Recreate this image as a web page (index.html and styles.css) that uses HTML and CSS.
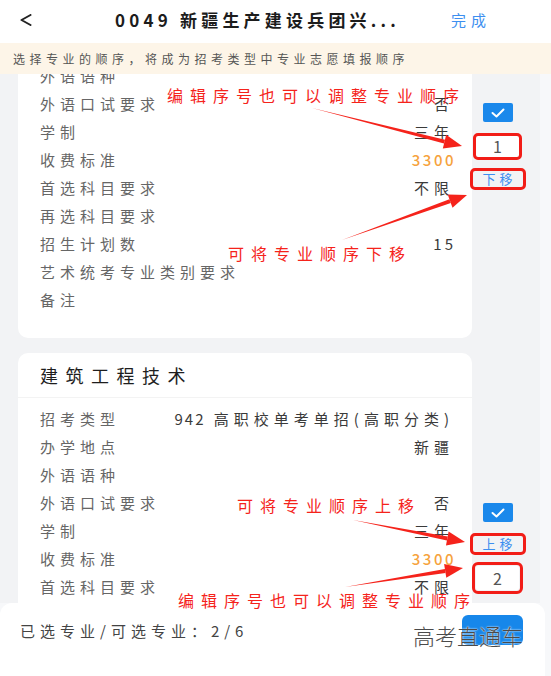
FILE: index.html
```html
<!DOCTYPE html>
<html lang="zh-CN">
<head>
    <meta charset="UTF-8">
    <title>专业排序</title>
    <link rel="stylesheet" href="styles.css">
</head>
<body>
<div class="screen">
    <header class="topbar">
        <svg class="back" width="12" height="12" viewBox="0 0 12 12"><polyline points="10.5,1 1.5,6 10.5,11" fill="none" stroke="#222" stroke-width="2" stroke-linejoin="round" stroke-linecap="round"/></svg>
        <h1 class="title">0049 新疆生产建设兵团兴...</h1>
        <span class="done">完成</span>
    </header>
    <div class="notice">选择专业的顺序，将成为招考类型中专业志愿填报顺序</div>

    <main class="list">
        <div class="list-inner">
            <!-- 第一个专业已滚动到上方，只剩下半部分 -->
            <section class="item">
                <div class="card card-top">
                    <ul class="fields">
                        <li><span class="label">外语语种</span><span class="value"></span></li>
                        <li><span class="label">外语口试要求</span><span class="value">否</span></li>
                        <li><span class="label">学制</span><span class="value">三年</span></li>
                        <li><span class="label">收费标准</span><span class="value fee">3300</span></li>
                        <li><span class="label">首选科目要求</span><span class="value">不限</span></li>
                        <li><span class="label">再选科目要求</span><span class="value"></span></li>
                        <li><span class="label">招生计划数</span><span class="value digits">15</span></li>
                        <li><span class="label">艺术统考专业类别要求</span><span class="value"></span></li>
                        <li><span class="label">备注</span><span class="value"></span></li>
                    </ul>
                </div>
                <div class="ops ops-top">
                    <span class="check"><svg width="14" height="10" viewBox="0 0 14 10"><polyline points="1.5,5 5.5,8.5 12.5,1.5" fill="none" stroke="#fff" stroke-width="2" stroke-linecap="round" stroke-linejoin="round"/></svg></span>
                    <span class="num marked">1</span>
                    <span class="move marked">下移</span>
                </div>
            </section>

            <!-- 第二个专业下半部分被底栏挡住 -->
            <section class="item">
                <div class="card card-bottom">
                    <h2 class="card-title">建筑工程技术</h2>
                    <ul class="fields">
                        <li><span class="label">招考类型</span><span class="value"><span class="digits">942</span> 高职校单考单招(高职分类)</span></li>
                        <li><span class="label">办学地点</span><span class="value">新疆</span></li>
                        <li><span class="label">外语语种</span><span class="value"></span></li>
                        <li><span class="label">外语口试要求</span><span class="value">否</span></li>
                        <li><span class="label">学制</span><span class="value">三年</span></li>
                        <li><span class="label">收费标准</span><span class="value fee">3300</span></li>
                        <li><span class="label">首选科目要求</span><span class="value">不限</span></li>
                    </ul>
                </div>
                <div class="ops ops-bottom">
                    <span class="check"><svg width="14" height="10" viewBox="0 0 14 10"><polyline points="1.5,5 5.5,8.5 12.5,1.5" fill="none" stroke="#fff" stroke-width="2" stroke-linecap="round" stroke-linejoin="round"/></svg></span>
                    <span class="move marked">上移</span>
                    <span class="num marked wide">2</span>
                </div>
            </section>
        </div>
    </main>

    <footer class="bottombar">
        <span class="count">已选专业/可选专业：2/6</span>
        <span class="btn"></span>
    </footer>

    <!-- 说明标注 -->
    <div class="notes">
        <svg class="arrows" width="551" height="676" viewBox="0 0 551 676">
            <g fill="#f5231b">
                <polygon points="312,108 445,139.7 444,143.5"/>
                <polygon points="462,146 442.8,148.4 446.2,134.8"/>
                <polygon points="342,240 450.8,203 449.4,199.2"/>
                <polygon points="467,195 452.5,207.7 447.7,194.5"/>
                <polygon points="353,520 446.9,540.5 447.7,536.5"/>
                <polygon points="465,542 446,545.4 448.6,531.6"/>
                <polygon points="345,587 445.5,572.9 444.9,568.9"/>
                <polygon points="463,568 446.3,577.8 444.1,564"/>
            </g>
        </svg>
        <span class="note note-1">编辑序号也可以调整专业顺序</span>
        <span class="note note-2">可将专业顺序下移</span>
        <span class="note note-3">可将专业顺序上移</span>
        <span class="note note-4">编辑序号也可以调整专业顺序</span>
    </div>
    <div class="watermark">高考直通车</div>
</div>
</body>
</html>
```

FILE: styles.css
```css
* {
    margin: 0;
    padding: 0;
    box-sizing: border-box;
}

body {
    font-family: "Noto Sans CJK SC", "Noto Sans", sans-serif;
    background: #f7f8fa;
}

ul, li {
    list-style: none;
}

.screen {
    position: relative;
    width: 551px;
    height: 676px;
    display: flex;
    flex-direction: column;
    overflow: hidden;
    background: #f7f8fa;
}

.digits {
    letter-spacing: 2px;
}

/* 顶部导航 */
.topbar {
    height: 43px;
    flex: none;
    display: flex;
    align-items: center;
    padding: 0 60px 4px 20px;
    background: #fff;
}

.topbar .back {
    flex: none;
}

.topbar .title {
    flex: none;
    margin-left: 83px;
    font-size: 17px;
    font-weight: 700;
    letter-spacing: 4.2px;
    color: #1c1c1c;
    white-space: nowrap;
}

.topbar .done {
    margin-left: auto;
    font-size: 15px;
    letter-spacing: 5px;
    color: #3d8ff0;
}

.notice {
    height: 31px;
    flex: none;
    line-height: 31px;
    padding-left: 13px;
    font-size: 12px;
    letter-spacing: 4.5px;
    color: #555;
    background: #fdf5e8;
    position: relative;
    z-index: 1;
}

/* 列表 */
.list {
    flex: 1;
    overflow: hidden;
    background: #f2f3f5;
    border-right: 11px solid #f7f8fa;
}

.list-inner {
    margin-top: -19px;
    display: flex;
    flex-direction: column;
    gap: 15px;
}

.item {
    display: flex;
    padding: 0 17px 0 18px;
}

.card {
    width: 454px;
    flex: none;
    background: #fff;
    border-radius: 10px;
    padding-bottom: 25px;
}

.card-top {
    border-radius: 0 0 10px 10px;
}

.card-bottom {
    border-radius: 10px 10px 0 0;
}

.card-title {
    height: 45px;
    line-height: 45px;
    padding-left: 22px;
    font-size: 18px;
    font-weight: 400;
    letter-spacing: 7.5px;
    color: #1e1e1e;
    border-bottom: 1px solid #f3f3f3;
}

.fields {
    padding: 6px 18px 0 22px;
}

.fields li {
    height: 28px;
    display: flex;
    align-items: center;
    justify-content: space-between;
    font-size: 15px;
    letter-spacing: 5px;
    white-space: nowrap;
}

.fields .label {
    color: #666;
}

.fields .value {
    color: #3a3a3a;
}

.fields .value.digits {
    letter-spacing: 3px;
    margin-right: -2px;
}

.fields .fee {
    color: #f6a23c;
    font-weight: 500;
    letter-spacing: 2.5px;
    margin-right: -2px;
}

/* 右侧操作 */
.ops {
    width: 51px;
    flex: none;
    display: flex;
    flex-direction: column;
    align-items: center;
    gap: 14px;
}

/* 卡片只露出一部分，操作区仍按整张卡片的中线摆放 */
.ops-top {
    padding-top: 48px;
}

.ops-bottom {
    padding-top: 150px;
}

.check {
    width: 30px;
    height: 19px;
    display: flex;
    align-items: center;
    justify-content: center;
    background: #1a88eb;
    border-radius: 2px;
}

.num {
    width: 43px;
    height: 21px;
    line-height: 21px;
    text-align: center;
    font-size: 16px;
    color: #555;
    background: #fff;
}

.num.wide {
    height: 24px;
    line-height: 24px;
    outline-offset: 1px;
}

.move {
    width: 50px;
    height: 16px;
    line-height: 16px;
    text-align: center;
    font-size: 13px;
    letter-spacing: 4px;
    text-indent: 4px;
    color: #3d8ff0;
}

.marked {
    outline: 3px solid #f21d17;
    border-radius: 2px;
}

/* 底部 */
.bottombar {
    height: 73px;
    flex: none;
    margin-right: 6px;
    display: flex;
    justify-content: space-between;
    align-items: flex-start;
    padding: 12px 22px 0 20px;
    background: #fff;
    border-radius: 12px 12px 0 0;
}

.count {
    margin-top: 5px;
    font-size: 15px;
    letter-spacing: 5px;
    color: #444;
}

.btn {
    width: 61px;
    height: 30px;
    background: #1787ea;
    border-radius: 6px;
}

/* 标注 */
.notes {
    position: absolute;
    left: 0;
    top: 0;
    width: 551px;
    height: 676px;
    pointer-events: none;
    z-index: 2;
}

.arrows {
    position: absolute;
    left: 0;
    top: 0;
}

.note {
    position: absolute;
    line-height: 22px;
    font-size: 16px;
    letter-spacing: 7px;
    color: #f5231b;
    white-space: nowrap;
}

.note-1 { left: 167px; top: 84px; }
.note-2 { left: 228px; top: 242px; background: #fff; }
.note-3 { left: 237px; top: 494px; background: #fff; }
.note-4 { left: 178px; top: 589px; }

.watermark {
    position: absolute;
    left: 413px;
    top: 619px;
    font-size: 22px;
    font-weight: 300;
    color: #4a4a4a;
    text-shadow: 0 0 2px #fff, 0 0 1px #fff;
    z-index: 3;
}
```
